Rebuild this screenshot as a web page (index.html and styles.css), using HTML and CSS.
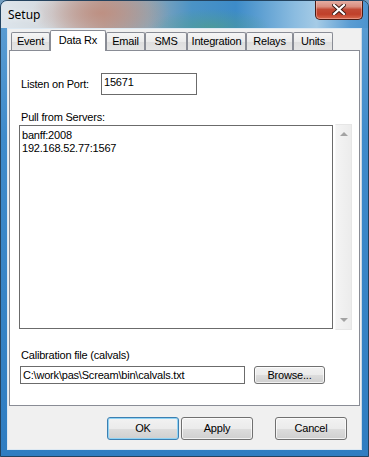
FILE: index.html
```html
<!DOCTYPE html>
<html>
<head>
<meta charset="utf-8">
<title>Setup</title>
<link rel="stylesheet" href="styles.css">
</head>
<body>
<div class="window">
  <div class="titlebar">
    <span class="title">Setup</span>
    <div class="close">
      <svg width="14" height="11" viewBox="0 0 14 11"><path d="M2 1 L12 10 M12 1 L2 10" stroke="#3a1a14" stroke-width="4" stroke-linecap="square"/><path d="M2 1 L12 10 M12 1 L2 10" stroke="#ffffff" stroke-width="2.2" stroke-linecap="square"/></svg>
    </div>
  </div>
  <div class="client">
    <div class="tabs">
      <div class="tab first w-event">Event</div>
      <div class="tab active w-datarx">Data Rx</div>
      <div class="tab w-email">Email</div>
      <div class="tab w-sms">SMS</div>
      <div class="tab w-integ">Integration</div>
      <div class="tab w-relays">Relays</div>
      <div class="tab w-units">Units</div>
    </div>
    <div class="panel">
      <div class="port-row">
        <span class="port-label">Listen on Port:</span>
        <div class="edit port-edit">15671</div>
      </div>
      <div class="label servers-label">Pull from Servers:</div>
      <div class="list-wrap">
        <div class="list">banff:2008<br>192.168.52.77:1567</div>
        <div class="scrollbar">
          <span class="arrow up"></span>
          <span class="arrow down"></span>
        </div>
      </div>
      <div class="label calib-label">Calibration file (calvals)</div>
      <div class="calib-row">
        <div class="edit calib-edit">C:\work\pas\Scream\bin\calvals.txt</div>
        <div class="btn browse">Browse...</div>
      </div>
    </div>
    <div class="buttons">
      <div class="btn default">OK</div>
      <div class="btn">Apply</div>
      <div class="btn cancel">Cancel</div>
    </div>
  </div>
</div>
</body>
</html>
```

FILE: styles.css
```css
* { box-sizing: border-box; margin: 0; padding: 0; }
html, body { width: 369px; height: 457px; overflow: hidden; }
body {
  background: #6e9cc0;
  font-family: "Liberation Sans", Arial, sans-serif;
  font-size: 11px;
  letter-spacing: -0.2px;
  color: #000;
}
.window {
  width: 369px;
  height: 457px;
  border: 1px solid #24435f;
  border-radius: 7px 7px 0 0;
  padding: 0 6px 6px;
  display: flex;
  flex-direction: column;
  background: linear-gradient(to bottom, #5f9fd3 0%, #3f8bcb 30%, #2f7dc1 100%);
  overflow: hidden;
}
.titlebar {
  height: 27px;
  margin: 0 -6px;
  padding-left: 7px;
  display: flex;
  align-items: flex-start;
  background:
    radial-gradient(ellipse 70px 30px at 100px 12px, rgba(190,140,125,0.85), rgba(190,140,125,0) 100%),
    radial-gradient(ellipse 60px 18px at 210px 26px, rgba(80,160,130,0.6), rgba(80,160,130,0) 100%),
    linear-gradient(to right, #dde5ec 0%, #d3d9de 14%, #b9a6a2 28%, #8fa8b8 40%, #4b93c6 52%, #3d8bc8 64%, #8bbce0 80%, #a5cbe6 86%, #5b9dd3 95%, #4d94cf 100%);
}
.title {
  font-family: "Noto Sans", "Open Sans", sans-serif;
  font-size: 12px;
  letter-spacing: 0;
  line-height: 16px;
  margin-top: 6px;
  color: #000;
  text-shadow: 0 0 6px rgba(255,255,255,0.9);
}
.close {
  margin-left: auto;
  margin-right: 5px;
  margin-top: -1px;
  width: 48px;
  height: 20px;
  border: 1px solid #4a1a12;
  border-top: none;
  border-radius: 0 0 5px 5px;
  background: linear-gradient(to bottom, #e6b2a8 0%, #d98e7f 35%, #c24a35 50%, #c0402a 75%, #d86a4e 100%);
  box-shadow: inset 0 0 0 1px rgba(255,200,190,0.45);
  display: flex;
  align-items: center;
  justify-content: center;
}
.client {
  flex: 1;
  border: 1px solid #dce8f2;
  border-right-color: #c9d9e6;
  background: #f0f0f0;
  padding: 1px 0 0 1px;
  display: flex;
  flex-direction: column;
}
.tabs {
  height: 20px;
  display: flex;
  align-items: flex-end;
  position: relative;
  z-index: 2;
}
.tab {
  height: 18px;
  border: 1px solid #898c95;
  border-bottom: none;
  border-radius: 2px 2px 0 0;
  background: linear-gradient(to bottom, #f5f5f5 0%, #ebebeb 50%, #dedede 51%, #e5e5e5 100%);
  text-align: center;
  line-height: 17px;
  white-space: nowrap;
}
.tab.first { margin-left: 2px; }
.tab.active {
  height: 21px;
  margin-bottom: -1px;
  background: #fff;
  line-height: 18px;
}
.w-event { width: 39px; }
.w-datarx { width: 56px; }
.w-email { width: 39px; }
.w-sms { width: 42px; }
.w-integ { width: 59px; }
.w-relays { width: 47px; }
.w-units { width: 40px; }
.panel {
  width: 351px;
  height: 356px;
  background: #fff;
  border: 1px solid #898c95;
  padding: 22px 0 0 10px;
  display: flex;
  flex-direction: column;
}
.port-row {
  display: flex;
  align-items: center;
  padding-left: 1px;
}
.port-label { width: 80px; }
.edit {
  border: 1px solid #6b6b6b;
  background: #fff;
  padding-left: 2px;
  white-space: nowrap;
}
.port-edit {
  width: 96px;
  height: 22px;
  line-height: 17px;
}
.label { line-height: 13px; padding-left: 1px; }
.servers-label { margin-top: 16px; }
.list-wrap {
  margin-top: 0;
  margin-left: -1px;
  display: flex;
  align-items: center;
  gap: 2px;
}
.list {
  width: 314px;
  height: 204px;
  border: 1px solid #6b6b6b;
  padding: 3px 0 0 2px;
  line-height: 13px;
}
.scrollbar {
  width: 17px;
  height: 206px;
  background: linear-gradient(to right, #f4f4f4, #ececec);
  border: 1px solid #e6e6e6;
  border-left-color: #f8f8f8;
  display: flex;
  flex-direction: column;
  justify-content: space-between;
  align-items: center;
  padding: 7px 0 7px;
}
.arrow {
  width: 0;
  height: 0;
  border-left: 4px solid transparent;
  border-right: 4px solid transparent;
}
.arrow.up { border-bottom: 4px solid #a3a3a3; }
.arrow.down { border-top: 4px solid #a3a3a3; }
.calib-label { margin-top: 19px; }
.calib-row {
  margin-top: 4px;
  display: flex;
  align-items: center;
  gap: 9px;
}
.calib-edit {
  width: 225px;
  height: 18px;
  line-height: 16px;
}
.btn {
  border: 1px solid #707070;
  border-radius: 3px;
  background: linear-gradient(to bottom, #f2f2f2 0%, #ebebeb 50%, #dddddd 51%, #cfcfcf 100%);
  box-shadow: inset 0 0 0 1px rgba(255,255,255,0.7);
  text-align: center;
  white-space: nowrap;
}
.browse {
  width: 71px;
  height: 18px;
  line-height: 16px;
}
.buttons {
  margin-top: 11px;
  display: flex;
  padding-left: 98px;
  gap: 2px;
}
.buttons .btn {
  width: 72px;
  height: 23px;
  line-height: 21px;
}
.buttons .btn.default {
  border-color: #3c7fb1;
  box-shadow: inset 0 0 0 1px #8fd3f5;
}
.buttons .btn.cancel { margin-left: 20px; }
```
